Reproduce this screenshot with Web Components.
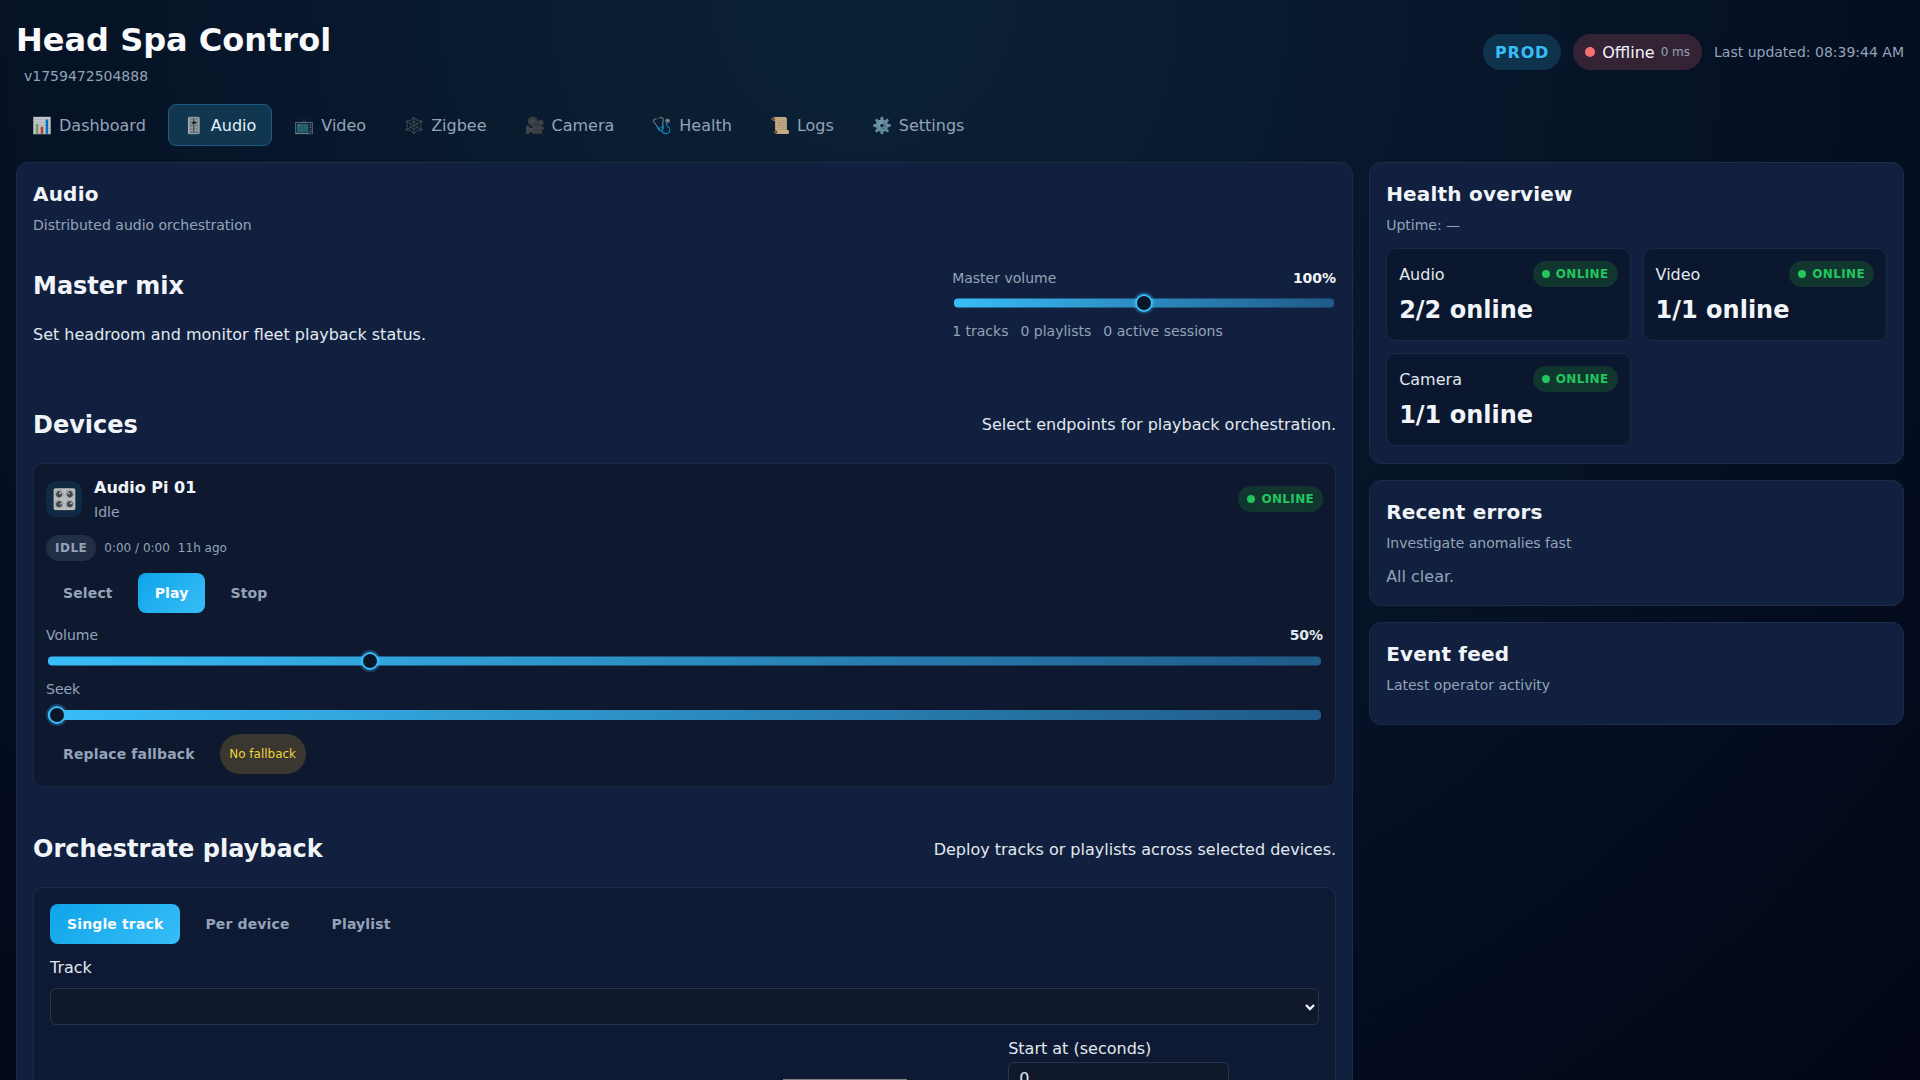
<!doctype html>
<html lang="en">
<head>
<meta charset="utf-8">
<title>Head Spa Control</title>
<style>
  html, body { margin: 0; height: 100%; overflow: hidden; }
  body {
    font-family: "DejaVu Sans", sans-serif;
    color: #f1f5f9;
    background: radial-gradient(circle at 45% 0, #0b2236 0, #061226 55%, #020617 100%);
    background-color: #020617;
  }
</style>
</head>
<body>
<template id="t-card">
  <style>
    :host {
      display: block;
      box-sizing: border-box;
      padding: 16px;
      background: #11203e;
      border: 1px solid #1c2c48;
      border-radius: 12px;
    }
    h3 { margin: 0; font-size: 20px; line-height: 30px; font-weight: 700; letter-spacing: .2px; color: #f1f5f9; }
    p { margin: 6px 0 0; font-size: 14px; line-height: 20px; color: #94a3b8; }
  </style>
  <h3></h3>
  <p></p>
  <slot></slot>
</template>

<script>
'use strict'

// base class: markup + styles set in an open shadow root
class Base extends HTMLElement {
  constructor() {
    super()
    this.attachShadow({ mode: 'open' })
  }
}

class HsCard extends Base {
  connectedCallback() {
    this.shadowRoot.appendChild(document.getElementById('t-card').content.cloneNode(true))
    this.shadowRoot.querySelector('h3').textContent = this.getAttribute('title') || ''
    this.shadowRoot.querySelector('p').textContent = this.getAttribute('sub') || ''
  }
}

class HsPill extends Base {
  connectedCallback() {
    const kind = this.getAttribute('kind') || 'online'
    this.shadowRoot.innerHTML = `
      <style>
        :host {
          display: inline-flex; align-items: center; gap: 6px;
          height: 26px; box-sizing: border-box; padding: 0 9px;
          border-radius: 999px;
          font-size: 12px; font-weight: 700; letter-spacing: .36px;
        }
        :host([kind=online]) { background: #11352f; color: #22c55e; }
        :host([kind=idle]) { background: #222f47; color: #94a3b8; letter-spacing: .5px; }
        i { width: 8px; height: 8px; border-radius: 50%; background: currentColor; }
      </style>
      ${kind === 'online' ? '<i></i>' : ''}<slot></slot>`
  }
}

class HsButton extends Base {
  connectedCallback() {
    this.shadowRoot.innerHTML = `
      <style>
        :host {
          display: inline-flex; align-items: center; justify-content: center;
          height: 40px; box-sizing: border-box; padding: 0 17px;
          border-radius: 8px;
          font-size: 14px; font-weight: 700; letter-spacing: .14px; color: #94a3b8;
        }
        :host([primary]) { color: #f8fafc; background: linear-gradient(135deg, #0ea5e9, #38bdf8); }
      </style>
      <slot></slot>`
  }
}

class HsSlider extends Base {
  connectedCallback() {
    const at = this.getAttribute('at')
    this.shadowRoot.innerHTML = `
      <style>
        :host { display: block; position: relative; height: 18px; --h: 9px; }
        .track {
          position: absolute; left: 2px; right: 2px; top: 50%; height: var(--h);
          transform: translateY(-50%);
          border-radius: 4px;
          background: linear-gradient(90deg, #38bdf8, #1f5a88);
        }
        .thumb {
          position: absolute; top: 50%; width: 14px; height: 14px;
          transform: translate(-50%, -50%);
          border: 2px solid #38bdf8; border-radius: 50%;
          background: #0a1628;
          box-shadow: 0 0 0 2px rgba(56, 189, 248, .25);
        }
      </style>
      <div class="track"></div>
      <div class="thumb" style="left: ${at}"></div>`
  }
}

class HsTab extends Base {
  connectedCallback() {
    this.shadowRoot.innerHTML = `
      <style>
        :host {
          display: inline-flex; align-items: center; gap: 8px;
          height: 42px; box-sizing: border-box; padding: 0 15px;
          border: 1px solid transparent; border-radius: 8px;
          font-size: 16px; color: #94a3b8;
        }
        :host([active]) { background: #103650; border-color: #1d5c80; color: #e2f3fc; }
        .ico { font-size: 16px; width: 19px; text-align: center; opacity: .75; }
      </style>
      <span class="ico">${this.getAttribute('ico')}</span><slot></slot>`
  }
}

class HsHealth extends Base {
  connectedCallback() {
    this.shadowRoot.innerHTML = `
      <style>
        :host {
          display: block; box-sizing: border-box;
          padding: 12px;
          background: #0b172e;
          border: 1px solid #1a2a44; border-radius: 10px;
        }
        .top { display: flex; align-items: center; justify-content: space-between; font-size: 16px; color: #e2e8f0; }
        .val { margin-top: 5px; font-size: 24px; line-height: 36px; font-weight: 700; color: #f1f5f9; }
      </style>
      <div class="top"><span>${this.getAttribute('name')}</span><hs-pill kind="online">ONLINE</hs-pill></div>
      <div class="val"><slot></slot></div>`
  }
}

class HsHeader extends Base {
  connectedCallback() {
    this.shadowRoot.innerHTML = `
      <style>
        :host { display: flex; justify-content: space-between; align-items: center; height: 72px; }
        h1 { margin: 0; font-size: 32px; line-height: 48px; font-weight: 700; color: #f8fafc; }
        .ver { margin: 2px 0 2px 8px; font-size: 14px; line-height: 20px; color: #94a3b8; }
        .right { display: flex; align-items: center; gap: 12px; font-size: 14px; color: #94a3b8; }
        .env {
          display: flex; align-items: center; height: 36px; padding: 0 12px; box-sizing: border-box;
          border-radius: 999px; background: #0f334d; color: #38bdf8;
          font-size: 16px; font-weight: 700; letter-spacing: .8px;
        }
        .status {
          display: flex; align-items: center; gap: 6px; height: 36px; padding: 0 12px; box-sizing: border-box;
          border-radius: 999px; background: #332335; color: #f1f5f9; font-size: 16px;
        }
        .status i { width: 10px; height: 10px; border-radius: 50%; background: #f87171; margin-right: 1px; }
        .status small { font-size: 12px; color: #94a3b8; }
      </style>
      <div>
        <h1>Head Spa Control</h1>
        <div class="ver">v1759472504888</div>
      </div>
      <div class="right">
        <div class="env">PROD</div>
        <div class="status"><i></i>Offline <small>0 ms</small></div>
        <span>Last updated: 08:39:44 AM</span>
      </div>`
  }
}

class HsDevice extends Base {
  connectedCallback() {
    this.shadowRoot.innerHTML = `
      <style>
        :host {
          display: block; box-sizing: border-box; padding: 12px;
          background: #0e1930; border: 1px solid #1a2a44; border-radius: 10px;
        }
        .head { display: flex; align-items: center; justify-content: space-between; }
        .who { display: flex; align-items: center; gap: 12px; }
        .ico {
          width: 36px; height: 36px; border-radius: 10px; background: #0f2a42;
          display: flex; align-items: center; justify-content: center; font-size: 20px;
        }
        .name { font-size: 16px; line-height: 24px; font-weight: 700; color: #f1f5f9; }
        .state { margin-top: 2px; font-size: 14px; line-height: 20px; color: #94a3b8; }
        .meta { display: flex; align-items: center; gap: 8px; margin-top: 13px; font-size: 12px; color: #94a3b8; }
        .btns { display: flex; align-items: center; gap: 8px; margin-top: 12px; }
        .lab { display: flex; justify-content: space-between; font-size: 14px; line-height: 20px; color: #94a3b8; margin-top: 12px; }
        .lab b { color: #e2e8f0; font-size: 14px; }
        .lab.seek { margin-top: 9px; }
        hs-slider { margin-top: 7px; }
        .seek-bar { --h: 10px; }
        .last { margin-top: 10px; }
        .fallback {
          display: inline-flex; align-items: center; height: 40px; padding: 0 9.5px; box-sizing: border-box;
          border-radius: 20px; background: #3a3630; color: #eed33c; font-size: 12px;
        }
      </style>
      <div class="head">
        <div class="who">
          <div class="ico">🎛️</div>
          <div><div class="name">Audio Pi 01</div><div class="state">Idle</div></div>
        </div>
        <hs-pill kind="online">ONLINE</hs-pill>
      </div>
      <div class="meta"><hs-pill kind="idle">IDLE</hs-pill><span>0:00 / 0:00</span><span>11h ago</span></div>
      <div class="btns"><hs-button>Select</hs-button><hs-button primary>Play</hs-button><hs-button>Stop</hs-button></div>
      <div class="lab"><span>Volume</span><b>50%</b></div>
      <hs-slider at="25.4%"></hs-slider>
      <div class="lab seek"><span>Seek</span></div>
      <hs-slider class="seek-bar" at="11px"></hs-slider>
      <div class="btns last"><hs-button>Replace fallback</hs-button><div class="fallback">No fallback</div></div>`
  }
}

class HsOrchestrate extends Base {
  connectedCallback() {
    this.shadowRoot.innerHTML = `
      <style>
        :host {
          display: block; box-sizing: border-box; padding: 16px;
          background: #0e1a33; border: 1px solid #1c2c48; border-radius: 10px;
        }
        .btns { display: flex; gap: 8px; }
        label { display: block; margin-top: 12px; font-size: 16px; line-height: 24px; color: #e2e8f0; }
        .select {
          display: flex; align-items: center; justify-content: flex-end;
          margin-top: 8px; height: 37px; box-sizing: border-box; padding-right: 2px;
          background: #10192c; border: 1px solid #28354d; border-radius: 6px;
        }
        .row { display: flex; justify-content: flex-end; align-items: flex-start; margin-top: 12px; padding-right: 90px; gap: 101px; }
        .ghost { margin-top: 42px; width: 124px; height: 24px; border: 1px solid #808080; box-sizing: border-box; }
        .num {
          margin-top: 1px; width: 221px; height: 37px; box-sizing: border-box; padding: 6px 10px;
          background: #10192c; border: 1px solid #28354d; border-radius: 6px;
          font-size: 16px; color: #e2e8f0;
        }
        .row label { margin-top: 0; }
      </style>
      <div class="btns"><hs-button primary>Single track</hs-button><hs-button>Per device</hs-button><hs-button>Playlist</hs-button></div>
      <label>Track</label>
      <div class="select">
        <svg width="12" height="12" viewBox="0 0 12 12"><path d="M2 4l4 4 4-4" fill="none" stroke="#f1f5f9" stroke-width="2.4"/></svg>
      </div>
      <div class="row">
        <div class="ghost"></div>
        <div><label>Start at (seconds)</label><div class="num">0</div></div>
      </div>`
  }
}

class HsSection extends Base {
  connectedCallback() {
    this.shadowRoot.innerHTML = `
      <style>
        :host { display: block; }
        .head { display: flex; align-items: center; justify-content: space-between; margin-bottom: 22px; }
        h2 { margin: 0; font-size: 24px; line-height: 32px; font-weight: 700; color: #f1f5f9; }
        span { font-size: 16px; color: #e2e8f0; }
      </style>
      <div class="head"><h2>${this.getAttribute('title')}</h2><span>${this.getAttribute('sub')}</span></div>
      <slot></slot>`
  }
}

class HsMaster extends Base {
  connectedCallback() {
    this.shadowRoot.innerHTML = `
      <style>
        :host { display: flex; justify-content: space-between; align-items: flex-start; }
        h2 { margin: 2px 0 0; font-size: 24px; line-height: 32px; font-weight: 700; color: #f1f5f9; }
        p { margin: 20.5px 0 0; font-size: 16px; line-height: 24px; color: #e2e8f0; }
        .vol { width: 384px; }
        .lab { display: flex; justify-content: space-between; font-size: 14px; line-height: 20px; color: #94a3b8; }
        .lab b { color: #f1f5f9; font-size: 14px; }
        hs-slider { margin-top: 6px; }
        .stats { display: flex; gap: 12px; margin-top: 9px; font-size: 14px; line-height: 20px; color: #94a3b8; }
      </style>
      <div><h2>Master mix</h2><p>Set headroom and monitor fleet playback status.</p></div>
      <div class="vol">
        <div class="lab"><span>Master volume</span><b>100%</b></div>
        <hs-slider at="50%"></hs-slider>
        <div class="stats"><span>1 tracks</span><span>0 playlists</span><span>0 active sessions</span></div>
      </div>`
  }
}

class HsApp extends Base {
  connectedCallback() {
    this.shadowRoot.innerHTML = `
      <style>
        :host { display: block; box-sizing: border-box; padding: 16px; height: 100vh; overflow: hidden; }
        nav { display: flex; gap: 6px; margin-top: 16px; }
        .grid { display: grid; grid-template-columns: 2.5fr 1fr; gap: 16px; margin-top: 16px; align-items: start; }
        .side { display: flex; flex-direction: column; gap: 16px; }
        .health { display: grid; grid-template-columns: 1fr 1fr; gap: 12px; margin: 13px 0 .8px; }
        .clear { margin-top: 12px; font-size: 16px; line-height: 24px; color: #94a3b8; }
        .feed { height: 13px; }
        hs-master { margin-top: 33px; }
        .devices { margin-top: 62px; }
        .orch { margin-top: 46.5px; }
      </style>
      <hs-header></hs-header>
      <nav>
        <hs-tab ico="📊">Dashboard</hs-tab>
        <hs-tab ico="🎚️" active>Audio</hs-tab>
        <hs-tab ico="📺">Video</hs-tab>
        <hs-tab ico="🕸️">Zigbee</hs-tab>
        <hs-tab ico="🎥">Camera</hs-tab>
        <hs-tab ico="🩺">Health</hs-tab>
        <hs-tab ico="📜">Logs</hs-tab>
        <hs-tab ico="⚙️">Settings</hs-tab>
      </nav>
      <div class="grid">
        <hs-card title="Audio" sub="Distributed audio orchestration">
          <hs-master></hs-master>
          <hs-section class="devices" title="Devices" sub="Select endpoints for playback orchestration.">
            <hs-device></hs-device>
          </hs-section>
          <hs-section class="orch" title="Orchestrate playback" sub="Deploy tracks or playlists across selected devices.">
            <hs-orchestrate></hs-orchestrate>
          </hs-section>
        </hs-card>
        <div class="side">
          <hs-card title="Health overview" sub="Uptime: —">
            <div class="health">
              <hs-health name="Audio">2/2 online</hs-health>
              <hs-health name="Video">1/1 online</hs-health>
              <hs-health name="Camera">1/1 online</hs-health>
            </div>
          </hs-card>
          <hs-card title="Recent errors" sub="Investigate anomalies fast">
            <div class="clear">All clear.</div>
          </hs-card>
          <hs-card title="Event feed" sub="Latest operator activity"><div class="feed"></div></hs-card>
        </div>
      </div>`
  }
}

customElements.define('hs-card', HsCard)
customElements.define('hs-pill', HsPill)
customElements.define('hs-button', HsButton)
customElements.define('hs-slider', HsSlider)
customElements.define('hs-tab', HsTab)
customElements.define('hs-health', HsHealth)
customElements.define('hs-header', HsHeader)
customElements.define('hs-device', HsDevice)
customElements.define('hs-orchestrate', HsOrchestrate)
customElements.define('hs-section', HsSection)
customElements.define('hs-master', HsMaster)
customElements.define('hs-app', HsApp)

document.body.appendChild(document.createElement('hs-app'))
</script>
</body>
</html>
